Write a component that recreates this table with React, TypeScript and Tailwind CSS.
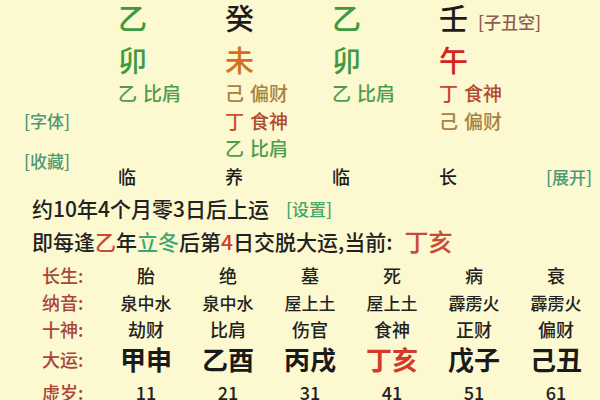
import React from "react";

const F = { fontFamily: '"Noto Sans CJK SC", "Noto Sans", sans-serif' };

const HS = ({ a, b, ca, cb }: { a: string; b: string; ca: string; cb: string }) => (
  <span className="whitespace-nowrap text-[19px] leading-none font-medium">
    <span className={ca}>{a}</span>
    <span className={"ml-[6px] " + cb}>{b}</span>
  </span>
);

export default function App() {
  const cols = ["胎", "绝", "墓", "死", "病", "衰"];
  const nayin = ["泉中水", "泉中水", "屋上土", "屋上土", "霹雳火", "霹雳火"];
  const shen = ["劫财", "比肩", "伤官", "食神", "正财", "偏财"];
  const dayun = ["甲申", "乙酉", "丙戌", "丁亥", "戊子", "己丑"];
  const sui = ["11", "21", "31", "41", "51", "61"];
  const row = "grid grid-cols-[105px_82px_82px_82px_82px_82px_82px] items-center";
  const grid4 = "grid grid-cols-[107px_107px_107px_107px_1fr] items-center";
  return (
    <div className="w-[600px] h-[400px] overflow-hidden bg-[#fcf8cf] text-[#222]" style={F}>
      {/* top pillars */}
      <div className="flex">
        <div className="w-[119px] flex flex-col pl-[24px] text-[17px] leading-none font-medium text-[#4b9a78]">
          <div className="h-[109px]" />
          <div className="h-[22px] flex items-center">[字体]</div>
          <div className="h-[22px] mt-[18px] flex items-center">[收藏]</div>
        </div>
        <div className="flex-1 flex flex-col">
          <div className={grid4 + " h-[34px] text-[29px] leading-none font-medium"}>
            <span className="text-[#3e9a3e]">乙</span>
            <span className="text-[#1c1c1c]">癸</span>
            <span className="text-[#3e9a3e]">乙</span>
            <span className="whitespace-nowrap text-[#1c1c1c]">
              壬<span className="ml-[10px] text-[17px] text-[#8c5c50] align-middle">[子丑空]</span>
            </span>
          </div>
          <div className={grid4 + " h-[32px] mt-[9px] text-[29px] leading-none font-medium"}>
            <span className="text-[#3e9a3e]">卯</span>
            <span className="text-[#d2701e]">未</span>
            <span className="text-[#3e9a3e]">卯</span>
            <span className="text-[#d42222]">午</span>
          </div>
          <div className={grid4 + " h-[26px] mt-[4px]"}>
            <HS a="乙" b="比肩" ca="text-[#4e9c4e]" cb="text-[#4e9c4e]" />
            <HS a="己" b="偏财" ca="text-[#a8823e]" cb="text-[#a8823e]" />
            <HS a="乙" b="比肩" ca="text-[#4e9c4e]" cb="text-[#4e9c4e]" />
            <HS a="丁" b="食神" ca="text-[#c8452a]" cb="text-[#b04a32]" />
          </div>
          <div className={grid4 + " h-[26px] mt-[2px]"}>
            <span />
            <HS a="丁" b="食神" ca="text-[#c8502a]" cb="text-[#b04a32]" />
            <span />
            <HS a="己" b="偏财" ca="text-[#a8823e]" cb="text-[#a8823e]" />
          </div>
          <div className={grid4 + " h-[26px] mt-[1px]"}>
            <span />
            <HS a="乙" b="比肩" ca="text-[#4e9c4e]" cb="text-[#4e9c4e]" />
          </div>
          <div className={grid4 + " h-[26px] mt-[3px] text-[18px] leading-none font-medium text-[#1c1c1c]"}>
            <span>临</span>
            <span>养</span>
            <span>临</span>
            <span>长</span>
            <span className="justify-self-end pr-[8px] text-[17px] text-[#4b9a78] whitespace-nowrap">[展开]</span>
          </div>
        </div>
      </div>

      {/* luck info */}
      <div className="pl-[32px] mt-[8px] h-[22px] flex items-center text-[21px] leading-none font-medium text-[#222] whitespace-nowrap">
        约10年4个月零3日后上运
        <span className="ml-[17px] text-[17px] text-[#3fa86a]">[设置]</span>
      </div>
      <div className="pl-[32px] mt-[11px] h-[22px] flex items-center text-[21px] leading-none font-medium text-[#222] whitespace-nowrap">
        即每逢<span className="text-[#c84a38]">乙</span>年<span className="text-[#3aa878]">立冬</span>后第
        <span className="text-[#d23a2a]">4</span>日交脱大运,当前:
        <span className="ml-[12px] text-[24px] text-[#c84a38]">丁亥</span>
      </div>

      {/* table */}
      <div className="mt-[12px] flex flex-col text-[#222] font-medium">
        <div className={row + " h-[22px]"}>
          <span className="pl-[42px] text-[18px] leading-none text-[#a8463a]">长生:</span>
          {cols.map((c) => (
            <span key={c} className="text-center text-[18px] leading-none">{c}</span>
          ))}
        </div>
        <div className={row + " h-[22px] mt-[5px]"}>
          <span className="pl-[42px] text-[18px] leading-none text-[#a8463a]">纳音:</span>
          {nayin.map((c, i) => (
            <span key={i} className="text-center text-[17px] leading-none whitespace-nowrap">{c}</span>
          ))}
        </div>
        <div className={row + " h-[22px] mt-[5px]"}>
          <span className="pl-[42px] text-[18px] leading-none text-[#a8463a]">十神:</span>
          {shen.map((c, i) => (
            <span key={i} className="text-center text-[18px] leading-none">{c}</span>
          ))}
        </div>
        <div className={row + " h-[30px] mt-[4px]"}>
          <span className="pl-[42px] text-[18px] leading-none text-[#a8463a]">大运:</span>
          {dayun.map((c, i) => (
            <span
              key={i}
              className={
                "text-center text-[26px] font-bold leading-none " + (i === 3 ? "text-[#d43a2a]" : "text-[#1a1a1a]")
              }
            >
              {c}
            </span>
          ))}
        </div>
        <div className={row + " h-[22px] mt-[7px]"}>
          <span className="pl-[42px] text-[18px] leading-none text-[#a8463a]">虚岁:</span>
          {sui.map((c, i) => (
            <span key={i} className="text-center text-[18px] leading-none">{c}</span>
          ))}
        </div>
      </div>
    </div>
  );
}
